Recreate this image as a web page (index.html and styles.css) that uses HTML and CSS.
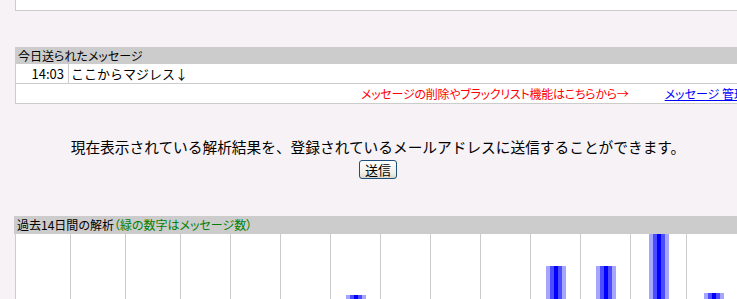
FILE: index.html
```html
<!DOCTYPE html>
<html lang="ja">
<head>
<meta charset="utf-8">
<title>解析</title>
<link rel="stylesheet" href="styles.css">
</head>
<body>
<div class="page">
  <div class="topbox"></div>

  <section class="msgtable">
    <div class="thead">今日送られたメッセージ</div>
    <div class="row">
      <div class="time">14:03</div>
      <div class="msg">ここからマジレス↓</div>
    </div>
    <div class="row links">
      <span class="red">メッセージの削除やブラックリスト機能はこちらから→</span>
      <a href="#" class="manage">メッセージ 管理</a>
    </div>
  </section>

  <section class="mail">
    <p class="mailtext">現在表示されている解析結果を、登録されているメールアドレスに送信することができます。</p>
    <button class="send" type="button">送信</button>
  </section>

  <section class="chart">
    <div class="thead">過去14日間の解析<span class="green">（緑の数字はメッセージ数）</span></div>
    <div class="cols">
      <div class="col"></div>
      <div class="col"></div>
      <div class="col"></div>
      <div class="col"></div>
      <div class="col"></div>
      <div class="col"></div>
      <div class="col"><div class="bar" style="height:39px"></div></div>
      <div class="col"></div>
      <div class="col"></div>
      <div class="col"></div>
      <div class="col"><div class="bar" style="height:68px"></div></div>
      <div class="col"><div class="bar" style="height:68px"></div></div>
      <div class="col"><div class="bar" style="height:100px"></div></div>
      <div class="col"><div class="bar" style="height:41px"></div></div>
    </div>
  </section>
</div>
</body>
</html>
```

FILE: styles.css
```css
html { overflow: hidden; }
body {
  margin: 0;
  background: #f6f2f6;
  font-family: "Noto Sans CJK JP", "Noto Sans", sans-serif;
  color: #000;
}
.page {
  width: 726px;
  margin-left: 15px;
}
.topbox {
  height: 10px;
  background: #fff;
  border-left: 1px solid #cccccc;
  border-bottom: 1px solid #cccccc;
}
.msgtable {
  margin-top: 36px;
  border-left: 1px solid #cccccc;
  background: #fff;
}
.thead {
  background: #cccccc;
  height: 17px;
  line-height: 17px;
  font-size: 12px;
  padding-left: 3px;
  margin-left: -1px;
  font-feature-settings: "palt";
  white-space: nowrap;
}
.row {
  display: flex;
  height: 19px;
  border-bottom: 1px solid #cccccc;
  align-items: center;
}
.time {
  width: 53px;
  box-sizing: border-box;
  height: 100%;
  border-right: 1px solid #cccccc;
  text-align: right;
  padding-right: 4px;
  font-size: 13px;
  line-height: 19px;
}
.msg {
  padding-left: 2px;
  font-size: 13px;
  line-height: 19px;
}
.links {
  padding-left: 345px;
  font-size: 12px;
  white-space: nowrap;
  font-feature-settings: "palt";
}
.red {
  color: #ff0000;
  letter-spacing: -0.25px;
}
.manage {
  color: #0000ff;
  margin-left: 36px;
  text-decoration: underline;
}
.mail {
  text-align: center;
  margin-top: 34px;
}
.mailtext {
  margin: 0;
  font-size: 14.7px;
  line-height: 18px;
  white-space: nowrap;
}
.send {
  margin-top: 3px;
  width: 38px;
  height: 19px;
  padding: 0;
  font-family: inherit;
  font-size: 13px;
  line-height: 17px;
  color: #000;
  border: 1px solid #1c4f7c;
  border-radius: 3px;
  background: linear-gradient(#ffffff, #f0efe8 70%, #dcd8c8);
}
.chart {
  margin-top: 36px;
}
.green { color: #008000; }
.chart .thead { height: 18px; line-height: 18px; }
.cols {
  display: grid;
  grid-template-columns: 55px 55px 55px 50px 50px 50px 50px 50px 50px 50px 50px 50px 56px 1fr;
  height: 100px;
  background: #fff;
}
.col {
  border-left: 1px solid #cccccc;
  display: flex;
  justify-content: center;
  align-items: flex-end;
}
.bar {
  width: 20px;
  background: linear-gradient(to right,
    #a6a6ff 0 4px, #4d4dff 4px 8px, #0000ff 8px 12px, #4d4dff 12px 16px, #a6a6ff 16px 20px);
}
```
